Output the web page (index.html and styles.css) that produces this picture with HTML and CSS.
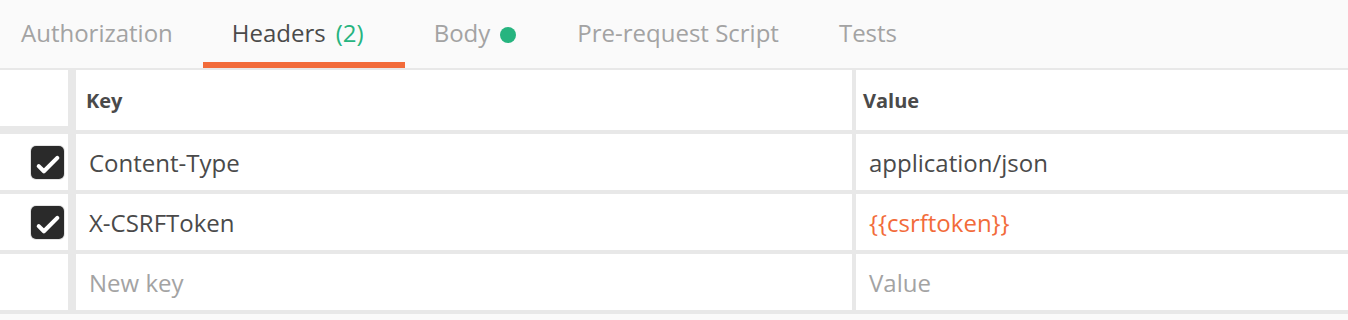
FILE: index.html
```html
<!DOCTYPE html>
<html lang="en">
<head>
  <meta charset="UTF-8">
  <meta name="viewport" content="width=device-width, initial-scale=1.0">
  <title>Headers</title>
  <link rel="stylesheet" href="styles.css">
</head>
<body>
  <div class="request-pane">
    <nav class="tabs">
      <span class="tab">Authorization</span>
      <span class="tab active">Headers<span class="tab-count">(2)</span></span>
      <span class="tab">Body<span class="tab-dot"></span></span>
      <span class="tab">Pre-request Script</span>
      <span class="tab">Tests</span>
    </nav>

    <div class="kv-table">
      <div class="kv-row kv-head">
        <div class="kv-check"></div>
        <div class="kv-key">Key</div>
        <div class="kv-value">Value</div>
      </div>
      <div class="kv-row">
        <div class="kv-check"><span class="checkbox checked"><svg viewBox="0 0 32 32"><path d="M7.5 19.5 L12.5 24.5 L25.5 11.5"/></svg></span></div>
        <div class="kv-key">Content-Type</div>
        <div class="kv-value">application/json</div>
      </div>
      <div class="kv-row">
        <div class="kv-check"><span class="checkbox checked"><svg viewBox="0 0 32 32"><path d="M7.5 19.5 L12.5 24.5 L25.5 11.5"/></svg></span></div>
        <div class="kv-key">X-CSRFToken</div>
        <div class="kv-value var">{{csrftoken}}</div>
      </div>
      <div class="kv-row">
        <div class="kv-check"></div>
        <div class="kv-key placeholder">New key</div>
        <div class="kv-value placeholder">Value</div>
      </div>
    </div>
  </div>
</body>
</html>
```

FILE: styles.css
```css
:root {
  --bg-color: #fafafa;
  --line-color: #e8e8e8;
  --text-color: #4a4a4a;
  --muted-color: #a3a3a3;
  --accent-color: #f26b3a;
  --green-color: #26b47f;
  --font-family: 'Open Sans', 'Noto Sans', sans-serif;
}
* { box-sizing: border-box; margin: 0; padding: 0; }
body { font-family: var(--font-family); background: var(--bg-color); color: var(--text-color); width: 1348px; height: 320px; overflow: hidden; }

.tabs { display: flex; height: 70px; background: var(--bg-color); border-bottom: 2px solid var(--line-color); }
.tab { display: block; height: 68px; padding: 16px 29px 0; font-size: 24px; line-height: 33px; color: var(--muted-color); border-bottom: 6px solid transparent; white-space: nowrap; }
.tab:first-child { padding-left: 21px; padding-right: 30px; }
.tab:nth-child(3) { padding-right: 31px; }
.tab:nth-child(4), .tab:nth-child(5) { padding-left: 30px; padding-right: 30px; }
.tab.active { color: var(--text-color); border-bottom-color: var(--accent-color); }
.tab-count { margin: 0 12px 0 10px; color: var(--green-color); }
.tab-dot { display: inline-block; width: 16px; height: 16px; margin: 0 0 2px 10px; border-radius: 50%; background: var(--green-color); vertical-align: middle; }

.kv-table { background: #fff; }
.kv-row { display: flex; height: 60px; }
.kv-row.kv-head { height: 64px; }
.kv-row > div { display: flex; align-items: center; height: 100%; border-bottom: 4px solid var(--line-color); font-size: 24px; white-space: nowrap; }
.kv-check { width: 76px; justify-content: flex-end; padding-right: 4px; border-right: 8px solid var(--line-color); }
.kv-key { width: 780px; padding-left: 13px; border-right: 4px solid var(--line-color); }
.kv-value { flex: 1; padding-left: 13px; }
.kv-head > div { font-size: 20px; font-weight: 700; }
.kv-head .kv-check { border-bottom-width: 8px; padding-bottom: 4px; }
.kv-head .kv-key { padding-left: 10px; }
.kv-head .kv-value { padding-left: 7px; }
.kv-value.var { color: var(--accent-color); }
.placeholder { color: var(--muted-color); }

.checkbox { display: block; width: 33px; height: 33px; border-radius: 5px; background: #2a2a2a; box-shadow: 0 0 0 1px #e4e4e4; }
.checkbox svg { display: block; width: 33px; height: 33px; fill: none; stroke: #fff; stroke-width: 4; stroke-linecap: round; stroke-linejoin: round; }
```
